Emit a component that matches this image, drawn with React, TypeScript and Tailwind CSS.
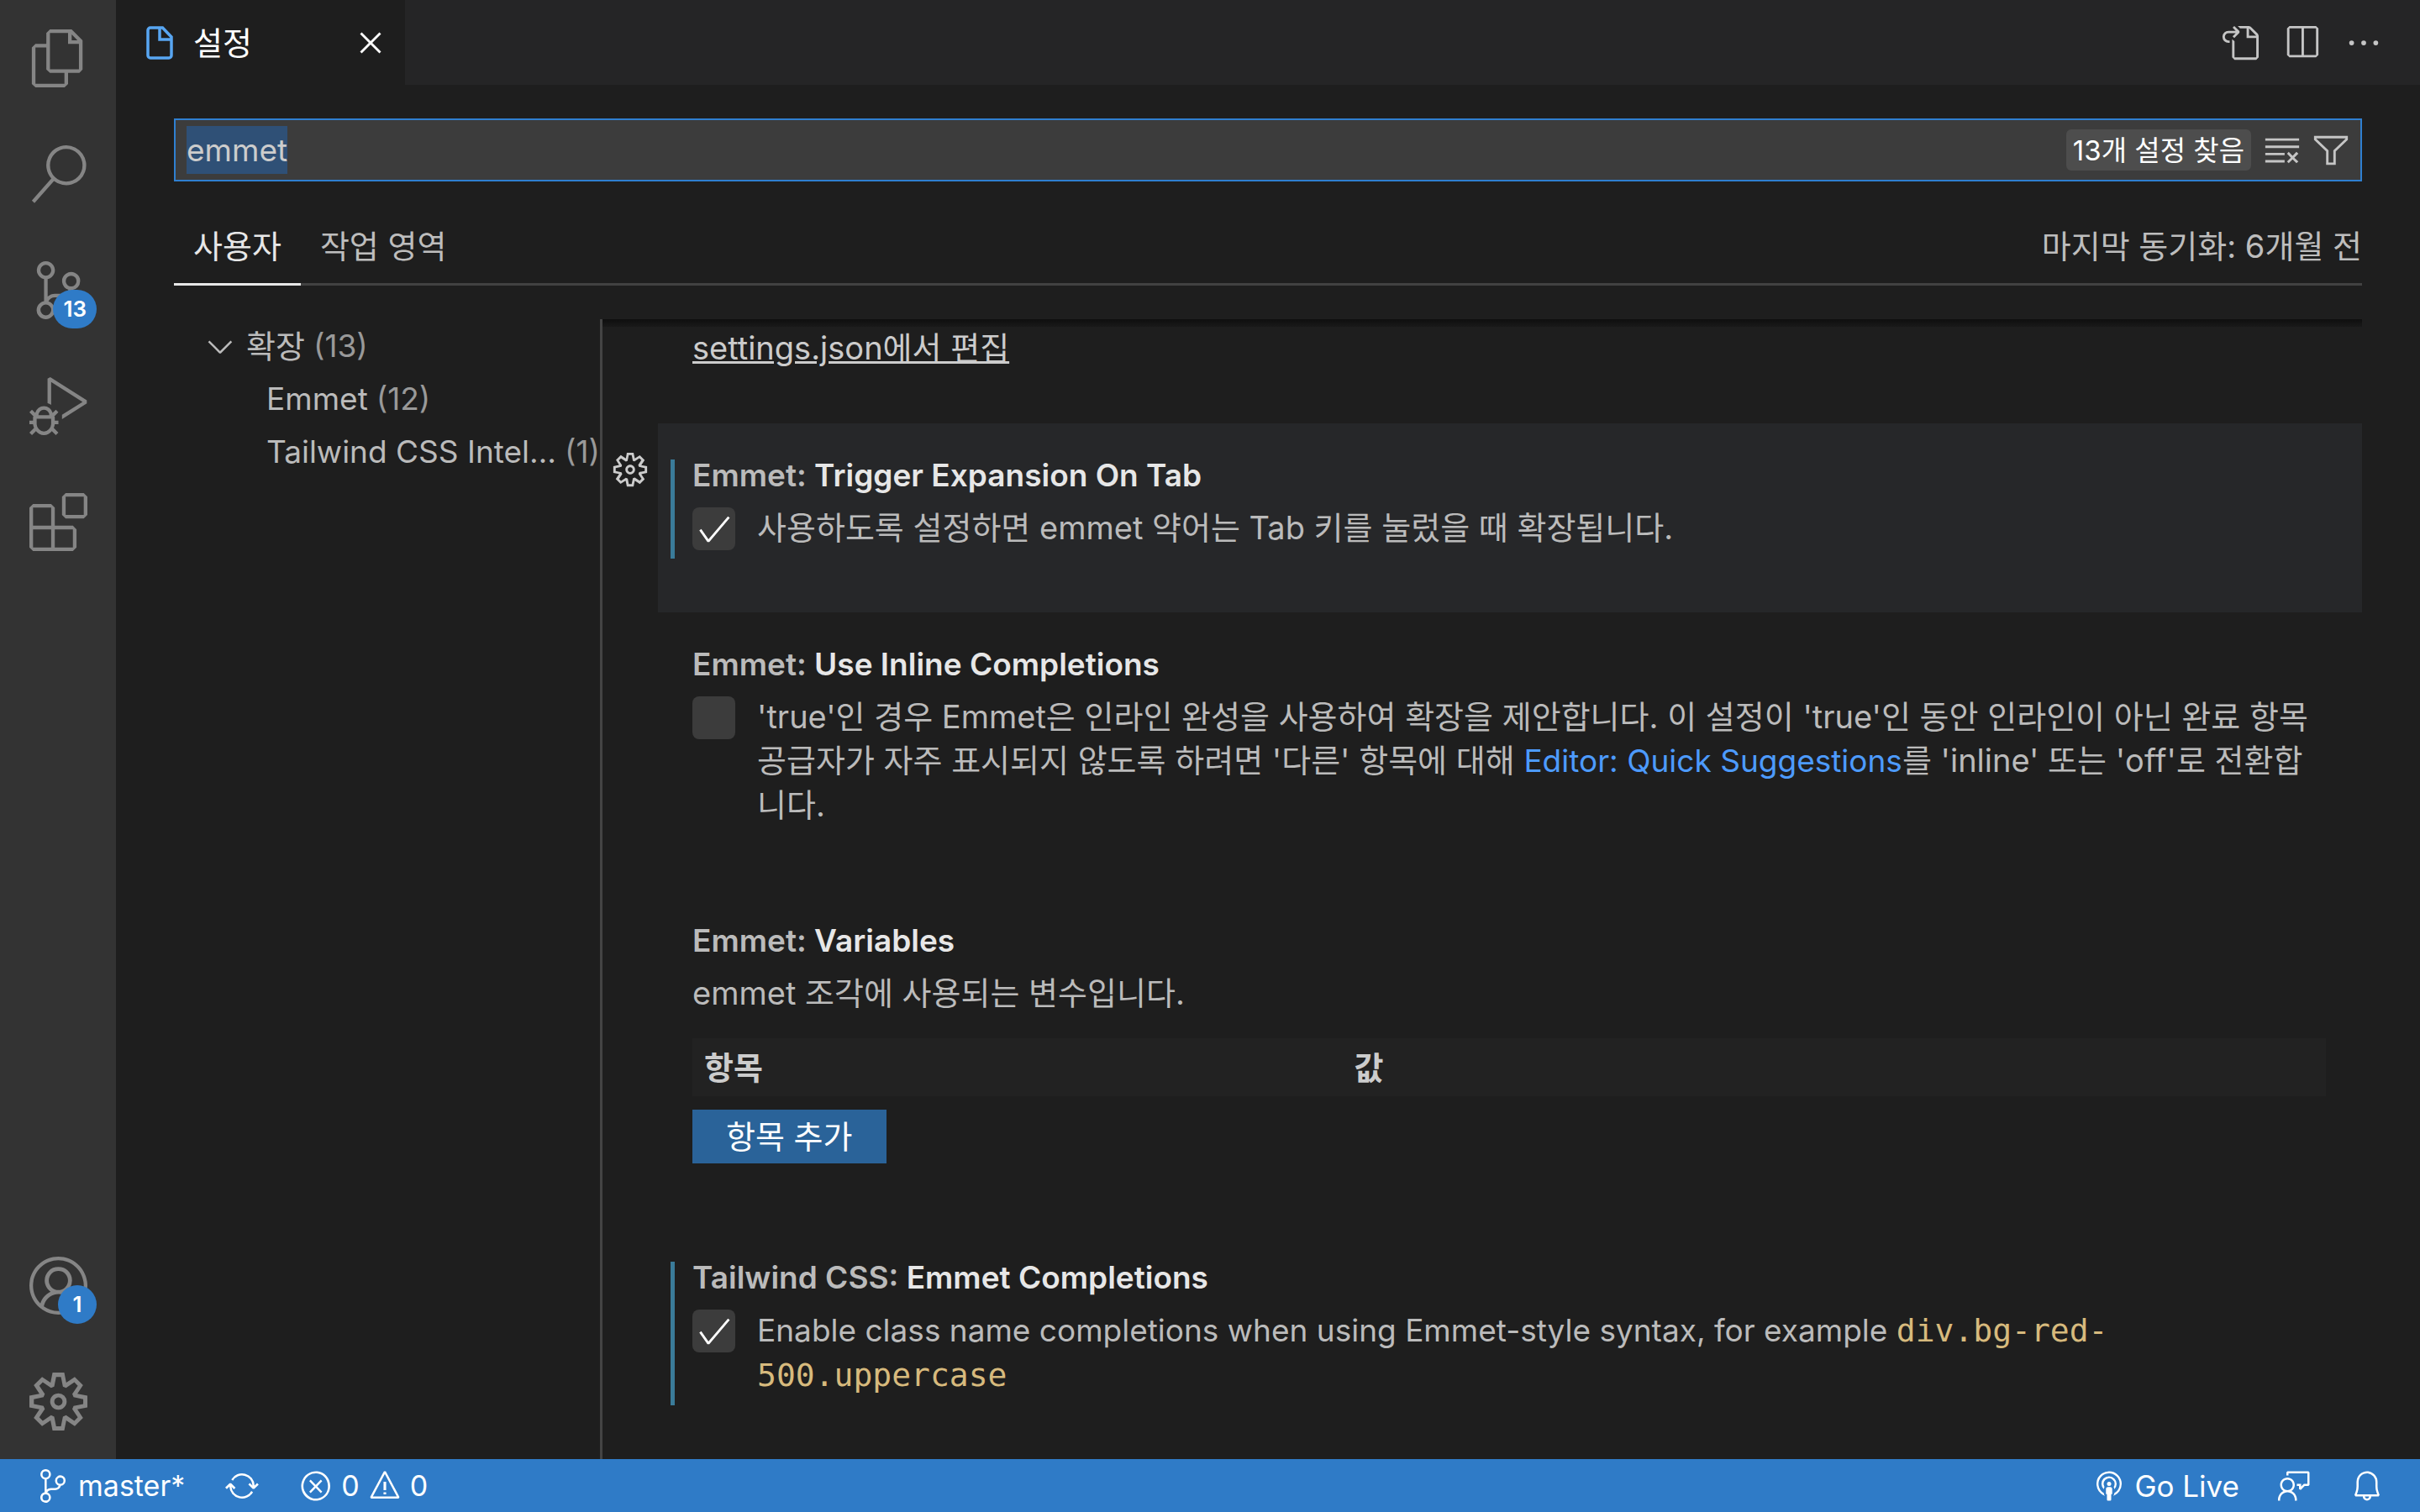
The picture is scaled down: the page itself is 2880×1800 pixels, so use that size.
import { useEffect, useRef, useState } from 'react';
import type { ReactNode } from 'react';
import type { IconType } from 'react-icons';
import {
  VscAccount,
  VscBell,
  VscBroadcast,
  VscCheck,
  VscChevronDown,
  VscClearAll,
  VscClose,
  VscDebugAlt,
  VscEllipsis,
  VscError,
  VscExtensions,
  VscFeedback,
  VscFiles,
  VscFilter,
  VscGear,
  VscGoToFile,
  VscSearch,
  VscSettingsGear,
  VscSourceControl,
  VscSplitHorizontal,
  VscSync,
  VscWarning,
} from 'react-icons/vsc';

function FileIcon({ className }: { className?: string }) {
  return (
    <svg viewBox="0 0 32 40" fill="none" stroke="currentColor" strokeWidth="3.5" className={className} aria-hidden="true">
      <path d="M5 2h14.5L30 13v22a3 3 0 0 1-3 3H5a3 3 0 0 1-3-3V5a3 3 0 0 1 3-3z" />
      <path d="M16 2v14h14" />
    </svg>
  );
}

function ActivityButton({ icon: Icon, label, badge }: { icon: IconType; label: string; badge?: number }) {
  return (
    <button type="button" aria-label={label} className="relative flex h-[138px] w-full items-center justify-center text-[#858585]">
      <Icon className="size-[69px]" />
      {badge !== undefined && (
        <span className="absolute right-[23px] top-[69px] flex h-[46px] min-w-[46px] items-center justify-center rounded-full bg-[#2f7bc7] px-3 text-[26px] font-semibold text-white">
          {badge}
        </span>
      )}
    </button>
  );
}

function ActivityBar() {
  return (
    <nav className="flex w-[138px] shrink-0 flex-col justify-between bg-[#333333]">
      <div>
        <ActivityButton icon={VscFiles} label="탐색기" />
        <ActivityButton icon={VscSearch} label="검색" />
        <ActivityButton icon={VscSourceControl} label="소스 제어" badge={13} />
        <ActivityButton icon={VscDebugAlt} label="실행 및 디버그" />
        <ActivityButton icon={VscExtensions} label="확장" />
      </div>
      <div>
        <ActivityButton icon={VscAccount} label="계정" badge={1} />
        <ActivityButton icon={VscSettingsGear} label="관리" />
      </div>
    </nav>
  );
}

function TabBar() {
  return (
    <header className="flex h-[101px] shrink-0 items-stretch justify-between bg-[#252526]">
      <div className="flex w-[344px] items-center bg-[#1e1e1e] pl-9 pr-[18px] text-white">
        <FileIcon className="h-10 w-8 text-[#58a6f2]" />
        <span className="ml-6 flex-1">설정</span>
        <button type="button" aria-label="닫기">
          <VscClose className="size-[46px]" />
        </button>
      </div>
      <div className="flex items-center gap-7 pr-11 text-[#c5c5c5]">
        <button type="button" aria-label="설정 열기(JSON)">
          <VscGoToFile className="size-[46px]" />
        </button>
        <button type="button" aria-label="편집기 분할">
          <VscSplitHorizontal className="size-[46px]" />
        </button>
        <button type="button" aria-label="기타 작업">
          <VscEllipsis className="size-[46px]" />
        </button>
      </div>
    </header>
  );
}

function SearchBox() {
  const inputRef = useRef<HTMLInputElement>(null);

  useEffect(() => {
    inputRef.current?.focus();
    inputRef.current?.select();
  }, []);

  return (
    <div className="mt-10 flex h-[75px] items-center border-2 border-[#2f7fd0] bg-[#3c3c3c] pl-[13px] pr-3">
      <input
        ref={inputRef}
        type="text"
        aria-label="설정 검색"
        defaultValue="emmet"
        className="h-[57px] min-w-0 flex-1 bg-transparent text-[37px] leading-[57px] text-[#cccccc] outline-none selection:bg-[#2f5076] selection:text-[#cccccc]"
      />
      <span className="mr-[14px] flex h-[49px] items-center rounded-md bg-[#4d4d4d] px-2 text-[33px] text-white">
        13개 설정 찾음
      </span>
      <button type="button" aria-label="검색 결과 지우기" className="mr-3 text-[#c5c5c5]">
        <VscClearAll className="size-[46px]" />
      </button>
      <button type="button" aria-label="설정 필터링" className="text-[#c5c5c5]">
        <VscFilter className="size-[46px]" />
      </button>
    </div>
  );
}

function ScopeTabs() {
  return (
    <div className="mt-8 flex h-[92px] items-stretch justify-between border-b-[3px] border-[#424242] text-[#bdbdbd]">
      <div className="flex">
        <button type="button" className="-mb-[3px] border-b-[3px] border-[#e7e7e7] px-[23px] text-[#e7e7e7]">
          사용자
        </button>
        <button type="button" className="px-[23px]">
          작업 영역
        </button>
      </div>
      <span className="self-center">마지막 동기화: 6개월 전</span>
    </div>
  );
}

function TableOfContents() {
  return (
    <ul className="w-[507px] shrink-0 text-[37px] text-[#bbbbbb]">
      <li className="flex h-[63px] items-center whitespace-nowrap pl-8">
        <VscChevronDown className="mr-2 size-[46px]" />
        <span className="text-[38px]">확장</span>
        <span className="ml-[10px] text-[#999999]">(13)</span>
      </li>
      <li className="flex h-[63px] items-center whitespace-nowrap pl-[110px]">
        Emmet<span className="ml-[10px] text-[#999999]">(12)</span>
      </li>
      <li className="flex h-[63px] items-center whitespace-nowrap pl-[110px]">
        Tailwind CSS Intel…<span className="ml-[10px] text-[#999999]">(1)</span>
      </li>
    </ul>
  );
}

type SettingProps = {
  category: string;
  name: string;
  modified?: boolean;
  focused?: boolean;
  children: ReactNode;
};

function Setting({ category, name, modified, focused, children }: SettingProps) {
  return (
    <section className="flex">
      <div className="flex w-[66px] shrink-0 justify-center pt-8">
        {focused && (
          <button type="button" aria-label="추가 작업" className="h-[46px] text-[#cccccc]">
            <VscGear className="size-[46px]" />
          </button>
        )}
      </div>
      <div className={`flex-1 pb-16 pl-[15px] pr-[43px] pt-[43px] ${focused ? 'bg-[#262729]' : ''}`}>
        <div className={`border-l-[5px] pb-[10px] pl-[21px] ${modified ? 'border-[#3a7b99]' : 'border-transparent'}`}>
          <h2 className="mb-[18px] text-[37px] font-semibold leading-[37px] text-[#bbbbbb]">
            {category}: <span className="text-[#e7e7e7]">{name}</span>
          </h2>
          {children}
        </div>
      </div>
    </section>
  );
}

function CheckSetting({ id, initial, children }: { id: string; initial: boolean; children: ReactNode }) {
  const [checked, setChecked] = useState(initial);

  return (
    <div className="flex gap-[26px]">
      <div className="mt-[2px] grid size-[51px] shrink-0 place-items-center rounded-lg bg-[#3c3c3c] text-white">
        <input
          id={id}
          type="checkbox"
          checked={checked}
          onChange={(e) => setChecked(e.target.checked)}
          className="col-start-1 row-start-1 size-full appearance-none rounded-lg"
        />
        {checked && <VscCheck className="pointer-events-none col-start-1 row-start-1 size-[46px]" />}
      </div>
      <label htmlFor={id} className="text-[#bbbbbb]">
        {children}
      </label>
    </div>
  );
}

function SettingsList() {
  return (
    <main className="relative min-w-0 flex-1 overflow-hidden border-l-[3px] border-[#444444]">
      {/* scroll shadow */}
      <div className="absolute inset-x-0 top-0 h-[9px] bg-gradient-to-b from-[#0f0f0f] to-[#191919]" />
      <div className="h-[124px] pl-[107px] pt-2">
        <a href="#settings-json" className="text-[#cccccc] underline">
          settings.json에서 편집
        </a>
      </div>

      <Setting category="Emmet" name="Trigger Expansion On Tab" modified focused>
        <CheckSetting id="trigger-expansion" initial>
          사용하도록 설정하면 emmet 약어는 Tab 키를 눌렀을 때 확장됩니다.
        </CheckSetting>
      </Setting>

      <Setting category="Emmet" name="Use Inline Completions">
        <CheckSetting id="inline-completions" initial={false}>
          'true'인 경우 Emmet은 인라인 완성을 사용하여 확장을 제안합니다. 이 설정이 'true'인 동안 인라인이 아닌 완료 항목
          공급자가 자주 표시되지 않도록 하려면 '다른' 항목에 대해{' '}
          <a href="#quick-suggestions" className="text-[37px] text-[#4d9bff]">
            Editor: Quick Suggestions
          </a>
          를 'inline' 또는 'off'로 전환합니다.
        </CheckSetting>
      </Setting>

      <Setting category="Emmet" name="Variables">
        <p className="text-[#bbbbbb]">emmet 조각에 사용되는 변수입니다.</p>
        <table className="mt-7 w-full table-fixed bg-[#222222] text-left text-[#cccccc]">
          <thead>
            <tr className="h-[69px]">
              <th className="w-2/5 pl-[14px] font-bold">항목</th>
              <th className="pl-[10px] font-bold">값</th>
            </tr>
          </thead>
        </table>
        <button type="button" className="mt-4 flex h-16 items-center bg-[#2a6399] px-10 text-white">
          항목 추가
        </button>
      </Setting>

      <Setting category="Tailwind CSS" name="Emmet Completions" modified>
        <CheckSetting id="tailwind-emmet" initial>
          <span className="text-[37px]">
            Enable class name completions when using Emmet-style syntax, for example{' '}
          </span>
          <code className="font-['DejaVu_Sans_Mono',monospace] text-[38px] text-[#d7ba7d]">div.bg-red-500.uppercase</code>
        </CheckSetting>
      </Setting>
    </main>
  );
}

function StatusBar() {
  return (
    <footer className="flex h-[63px] shrink-0 items-center justify-between bg-[#2f7bc7] px-[43px] text-[34px] text-white">
      <div className="flex items-center gap-12">
        <button type="button" className="flex items-center gap-[10px]">
          <VscSourceControl className="size-10" />
          master*
        </button>
        <button type="button" aria-label="변경 내용 동기화">
          <VscSync className="size-10" />
        </button>
        <button type="button" className="flex items-center gap-[10px]">
          <VscError className="size-10" />
          <span>0</span>
          <VscWarning className="size-10" />
          <span>0</span>
        </button>
      </div>
      <div className="flex items-center gap-[46px]">
        <button type="button" className="flex items-center gap-[10px]">
          <VscBroadcast className="size-10" />
          <span className="text-[35px]">Go Live</span>
        </button>
        <button type="button" aria-label="피드백">
          <VscFeedback className="size-10" />
        </button>
        <button type="button" aria-label="알림">
          <VscBell className="size-10" />
        </button>
      </div>
    </footer>
  );
}

export default function App() {
  return (
    <div
      lang="ko"
      className="flex h-screen flex-col bg-[#1e1e1e] font-['Inter','Noto_Sans_CJK_KR',sans-serif] text-[38px] leading-[52px]"
    >
      <div className="flex min-h-0 flex-1">
        <ActivityBar />
        <div className="flex min-w-0 flex-1 flex-col">
          <TabBar />
          <div className="flex min-h-0 flex-1 flex-col px-[69px]">
            <SearchBox />
            <ScopeTabs />
            <div className="mt-10 flex min-h-0 flex-1">
              <TableOfContents />
              <SettingsList />
            </div>
          </div>
        </div>
      </div>
      <StatusBar />
    </div>
  );
}
